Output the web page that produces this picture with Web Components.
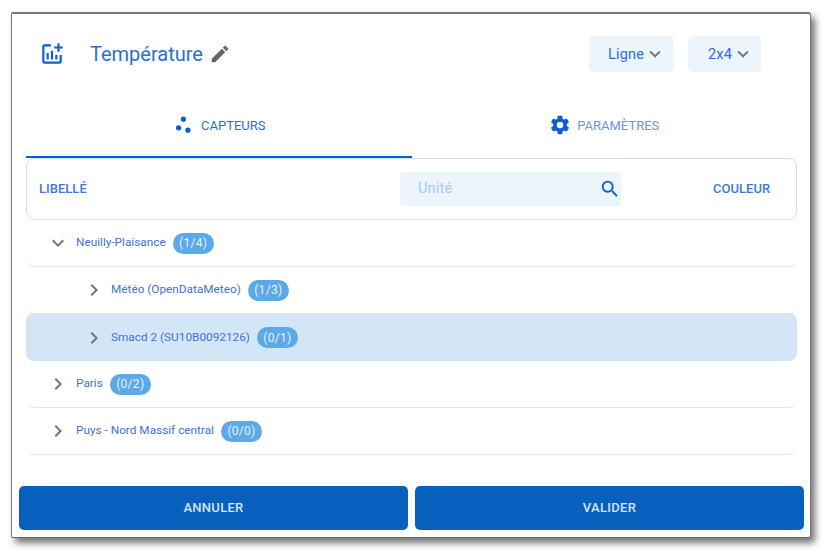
<!DOCTYPE html>
<html lang="fr"><head><meta charset="utf-8"><title>Température</title>
<style>
html,body{margin:0;padding:0;background:#fff;}
body{width:830px;height:557px;overflow:hidden;font-family:Roboto,sans-serif;padding:12px 0 0 11px;box-sizing:border-box;}
</style></head><body>
<chart-dialog>
  <dialog-header title-text="Température"></dialog-header>
  <tab-bar></tab-bar>
  <table-head></table-head>
  <tree-row label="Neuilly-Plaisance" count="(1/4)" level="0" open></tree-row>
  <tree-row label="Météo (OpenDataMeteo)" count="(1/3)" level="1"></tree-row>
  <tree-row label="Smacd 2 (SU10B0092126)" count="(0/1)" level="1" selected></tree-row>
  <tree-row label="Paris" count="(0/2)" level="0"></tree-row>
  <tree-row label="Puys - Nord Massif central" count="(0/0)" level="0"></tree-row>
  <dialog-actions></dialog-actions>
</chart-dialog>
<script>
const def=(name,html)=>customElements.define(name,class extends HTMLElement{
  connectedCallback(){
    if(this.shadowRoot)return;
    let h=typeof html==='function'?html(this):html;
    this.attachShadow({mode:'open'}).innerHTML=h;
  }
});
const chev=(dir,c='#757575')=>`<svg width="24" height="24" viewBox="0 0 24 24" fill="${c}" aria-hidden="true"><path d="${dir==='down'?'M7.41 8.59 12 13.17l4.59-4.58L18 10l-6 6-6-6z':'M8.59 16.59 13.17 12 8.59 7.41 10 6l6 6-6 6z'}"/></svg>`;

def('chart-dialog',`<style>
:host{display:flex;flex-direction:column;box-sizing:border-box;width:800px;height:526px;background:#fff;border:1px solid #777;border-top:2px solid #777;border-bottom-color:#666;border-radius:2px 3px 3px 2px;box-shadow:4px 5px 7px rgba(0,0,0,.55)}
</style><slot></slot>`);

def('dialog-header',t=>`<style>
:host{display:flex;align-items:center;height:80px;box-sizing:border-box;padding-left:27px;color:#2b6bd6}
svg{display:block}
.t{font-size:20px;margin-left:25px;color:#2a6fd4}
.e{margin-left:6px;display:flex}
.s{flex:1}
sel-box{margin-right:14px}
sel-box:last-child{margin-right:49px}
</style>
<svg width="26" height="26" viewBox="0 0 24 24" fill="#0a5fd0" aria-hidden="true"><path d="M22 5v2h-3v3h-2V7h-3V5h3V2h2v3h3zm-3 14H5V5h6V3H5c-1.1 0-2 .9-2 2v14c0 1.1.9 2 2 2h14c1.1 0 2-.9 2-2v-6h-2v6zm-4-6v4h2v-4h-2zm-4 4h2V9h-2v8zm-2 0v-6H7v6h2z"/></svg>
<span class="t">${t.getAttribute('title-text')}</span>
<span class="e"><svg width="22" height="22" viewBox="0 0 24 24" fill="#666" aria-hidden="true"><path d="M3 17.25V21h3.75L17.81 9.94l-3.75-3.75L3 17.25zM20.71 7.04a1 1 0 0 0 0-1.41l-2.34-2.34a1 1 0 0 0-1.41 0l-1.83 1.83 3.75 3.75 1.83-1.83z"/></svg></span>
<span class="s"></span>
<sel-box text="Ligne" w="85" pad="8"></sel-box><sel-box text="2x4" w="73" pad="7"></sel-box>`);

def('sel-box',t=>`<style>
:host{display:flex;align-items:center;justify-content:flex-end;box-sizing:border-box;width:${t.getAttribute('w')}px;height:36px;background:#ecf4fc;border-radius:5px;padding-right:${t.getAttribute('pad')}px;font-size:14.5px;color:#2a6fd4;letter-spacing:.15px}
svg{display:block;width:22px;height:22px}
</style><span>${t.getAttribute('text')}</span>${chev('down')}`);

def('tab-bar',`<style>
:host{display:flex;height:64px;margin:0 14px;box-sizing:border-box;width:771px}
tab-item{flex:1}
tab-item:first-child{flex:0 0 385px}
</style>
<tab-item text="CAPTEURS" icon="dots" gap="7" active></tab-item>
<tab-item text="PARAMÈTRES" icon="gear" gap="6"></tab-item>`);

def('tab-item',t=>{
 const active=t.hasAttribute('active');
 const ic=t.getAttribute('icon')==='dots'
 ?`<svg width="22" height="22" viewBox="0 0 22 22" fill="#0a5fd0" aria-hidden="true"><circle cx="11.4" cy="5.2" r="2.6"/><circle cx="6.6" cy="13.8" r="2.6"/><circle cx="15.9" cy="16.2" r="2.6"/></svg>`
 :`<svg width="22" height="22" viewBox="0 0 24 24" fill="#0a5fd0" aria-hidden="true"><path d="M19.43 12.98c.04-.32.07-.64.07-.98s-.03-.66-.07-.98l2.11-1.65c.19-.15.24-.42.12-.64l-2-3.46c-.12-.22-.39-.3-.61-.22l-2.49 1c-.52-.4-1.08-.73-1.69-.98l-.38-2.65A.49.49 0 0 0 14 2h-4c-.25 0-.46.18-.49.42l-.38 2.65c-.61.25-1.17.59-1.69.98l-2.49-1c-.23-.09-.49 0-.61.22l-2 3.46c-.13.22-.07.49.12.64l2.11 1.65c-.04.32-.07.65-.07.98s.03.66.07.98l-2.11 1.65c-.19.15-.24.42-.12.64l2 3.46c.12.22.39.3.61.22l2.49-1c.52.4 1.08.73 1.69.98l.38 2.65c.03.24.24.42.49.42h4c.25 0 .46-.18.49-.42l.38-2.65c.61-.25 1.17-.59 1.69-.98l2.49 1c.23.09.49 0 .61-.22l2-3.46c.12-.22.07-.49-.12-.64l-2.11-1.65zM12 15.5a3.5 3.5 0 1 1 0-7 3.5 3.5 0 0 1 0 7z"/></svg>`;
 return `<style>
:host{display:flex;align-items:center;justify-content:center;gap:${t.getAttribute('gap')}px;box-sizing:border-box;border-bottom:2px solid ${active?'#0a5fd0':'transparent'};font-size:13px;color:${active?'#2a6fd4':'#6f93dc'}}
svg{display:block}
</style>${ic}<span>${t.getAttribute('text')}</span>`});

def('table-head',`<style>
:host{display:flex;align-items:center;box-sizing:border-box;margin:0 14px;width:771px;height:62px;border:1px solid #c6e4f8;border-radius:8px;padding-left:12px;font-size:13px;font-weight:500;letter-spacing:.02px;color:#4179d8}
.l{width:361px;padding-bottom:2px}
.u{display:flex;align-items:center;justify-content:space-between;box-sizing:border-box;width:221px;height:34px;background:#ecf4fc;border-radius:4px;padding:0 0 0 18px;color:#a9c8f0;font-size:14.5px;font-weight:400;letter-spacing:.2px}
.u svg{display:block}
.u span{padding-bottom:1px}
.k{margin-left:92px;padding-bottom:2px}
</style><span class="l">LIBELLÉ</span>
<span class="u"><span>Unité</span><svg width="22" height="22" viewBox="0 0 24 24" fill="#0a5fd0" aria-hidden="true"><path d="M15.5 14h-.79l-.28-.27A6.47 6.47 0 0 0 16 9.5 6.5 6.5 0 1 0 9.5 16c1.61 0 3.09-.59 4.23-1.57l.27.28v.79l5 4.99L20.49 19l-4.99-5zm-6 0C7.01 14 5 11.99 5 9.5S7.01 5 9.5 5 14 7.01 14 9.5 11.99 14 9.5 14z"/></svg></span>
<span class="k">COULEUR</span>`);

def('tree-row',t=>{
 const lvl=+t.getAttribute('level'), sel=t.hasAttribute('selected'), open=t.hasAttribute('open');
 return `<style>
:host{display:flex;align-items:center;box-sizing:border-box;margin:0 14px;width:771px;height:47px;padding-left:${lvl?56:20}px;border-radius:8px;background:${sel?'#d3e6f6':'#fff'};${sel?'box-shadow:0 -1px 0 #d3e6f6;':'border-bottom:1px solid #e6e6e6;'}font-size:11.8px;color:#3f72d4}
svg{display:block;flex:none}
.l{margin-left:${lvl?5:6}px;position:relative;top:-1px}
.b{display:inline-flex;align-items:center;justify-content:center;height:21px;width:41px;margin-left:7px;border-radius:11px;background:#5ca9e9;color:#e6f2fc;font-size:12px;letter-spacing:.3px}
</style>${chev(open?'down':'right')}<span class="l">${t.getAttribute('label')}</span><span class="b">${t.getAttribute('count')}</span>`});

def('dialog-actions',`<style>
:host{display:flex;gap:7px;margin:auto 0 7px 7px;width:785px}
.b{flex:1;box-sizing:border-box;height:44px;padding-bottom:2px;display:flex;align-items:center;justify-content:center;background:#0760bd;color:#d6e4f4;border-radius:5px;font-size:13px;font-weight:500;letter-spacing:.3px}
</style><div class="b">ANNULER</div><div class="b">VALIDER</div>`);
</script>
</body></html>
